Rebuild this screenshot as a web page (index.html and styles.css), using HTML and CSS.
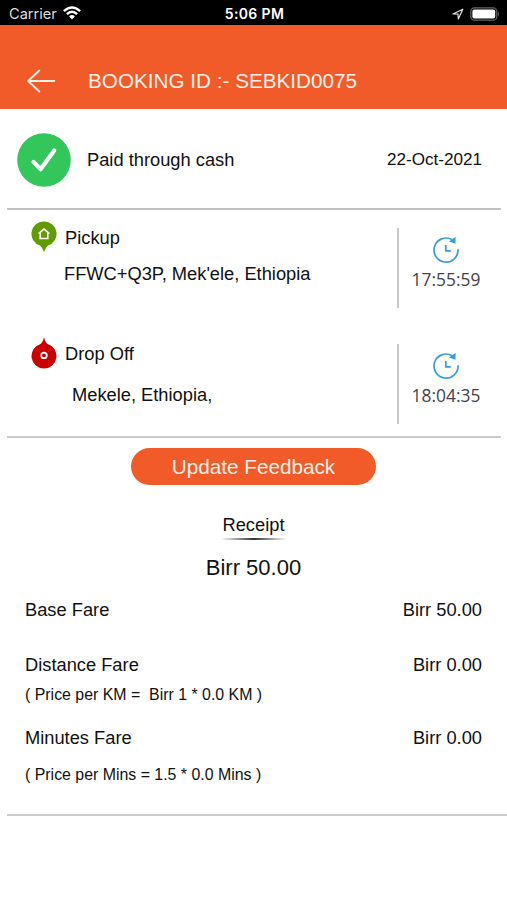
FILE: index.html
```html
<!DOCTYPE html>
<html lang="en">
<head>
<meta charset="utf-8">
<title>Booking receipt</title>
<link rel="stylesheet" href="styles.css">
</head>
<body>
<div class="status">
  <div class="carrier"><span>Carrier</span>
    <svg width="18" height="14" viewBox="0 0 18 14" fill="none" stroke="#fff" stroke-width="2.5"><path d="M.9 5.1Q9-2.2 17.1 5.1M3.9 8.1Q9 3.5 14.1 8.1"/><path d="M6.1 10.4Q9 7.8 11.9 10.4L9 13.4Z" fill="#fff" stroke="none"/></svg>
  </div>
  <div class="clock">5:06 PM</div>
  <div class="indicators">
    <svg width="12" height="12" viewBox="0 0 12 12" fill="none" stroke="#ddd" stroke-width="1.2" stroke-linejoin="round"><path d="M1 6L10.8 1.2L6.3 10.9L6 6.2Z"/></svg>
    <svg width="30" height="14" viewBox="0 0 30 14"><rect x=".8" y=".8" width="26" height="12.4" rx="3.8" fill="none" stroke="#666" stroke-width="1.2"/><rect x="2.4" y="2.4" width="22.8" height="9.2" rx="2" fill="#fff"/><path d="M28 4.5Q30 7 28 9.5Z" fill="#666"/></svg>
  </div>
</div>
<header class="header">
  <svg width="30" height="26" viewBox="0 0 30 26" fill="none" stroke="#fff1e8" stroke-width="1.9" stroke-linecap="round" stroke-linejoin="round"><path d="M27.300 13H1.200M12.300 2.500L1.200 13L12.300 23.500"/></svg>
  <h1>BOOKING ID :- SEBKID0075</h1>
</header>
<section class="paid">
  <svg width="54" height="54" viewBox="0 0 54 54"><circle cx="27" cy="27" r="26.8" fill="#33c65a"/><path d="M16.500 29L23.600 36.300L37.200 17.500" fill="none" stroke="#fff" stroke-width="4.200" stroke-linecap="round" stroke-linejoin="round"/></svg>
  <span class="method">Paid through cash</span>
  <span class="date">22-Oct-2021</span>
</section>
<section class="trip">
  <div class="stop">
    <svg class="pin" width="26" height="32" viewBox="0 0 26 32"><path d="M13 .5A12.300 12.300 0 0 1 17 24.500Q15 26 13 31Q11 26 9 24.500A12.300 12.300 0 0 1 13 .5Z" fill="#629b00"/><path d="M7.500 12.600L13 8.100L18.500 12.600M9.200 12V17.500H16.800V12" fill="none" stroke="#fff" stroke-width="1.600"/></svg>
    <div class="place"><div class="label">Pickup</div><div class="address">FFWC+Q3P, Mek'ele, Ethiopia</div></div>
    <div class="time">
      <svg width="26" height="26" viewBox="0 0 26 26" fill="none" stroke="#389cde" stroke-width="1.700"><path d="M25 12.200A12 12 0 1 1 18.900 2.600M12.800 8V13.800H17.800"/><path d="M17.300 4.300L21.900 1.100V5.800Z" fill="#389cde" stroke-width="1.300"/></svg>
      <span>17:55:59</span>
    </div>
  </div>
  <div class="stop dropoff">
    <svg class="pin" width="26" height="32" viewBox="0 0 26 32"><path d="M13 31.500A12.500 12.500 0 0 1 9.500 7Q11.500 5.500 13 .5Q14.500 5.500 16.500 7A12.500 12.500 0 0 1 13 31.500Z" fill="#cb0000"/><circle cx="13" cy="18.400" r="2.800" fill="none" stroke="#fff" stroke-width="1.700"/></svg>
    <div class="place"><div class="label">Drop Off</div><div class="address">Mekele, Ethiopia,</div></div>
    <div class="time">
      <svg width="26" height="26" viewBox="0 0 26 26" fill="none" stroke="#389cde" stroke-width="1.700"><path d="M25 12.200A12 12 0 1 1 18.900 2.600M12.800 8V13.800H17.800"/><path d="M17.300 4.300L21.900 1.100V5.800Z" fill="#389cde" stroke-width="1.300"/></svg>
      <span>18:04:35</span>
    </div>
  </div>
</section>
<button class="feedback">Update Feedback</button>
<section class="receipt">
  <h2>Receipt</h2>
  <div class="rule"></div>
  <div class="total">Birr 50.00</div>
  <div class="row base"><span>Base Fare</span><span>Birr 50.00</span></div>
  <div class="row"><span>Distance Fare</span><span>Birr 0.00</span></div>
  <p class="note km">( Price per KM =&nbsp; Birr 1 * 0.0 KM )</p>
  <div class="row"><span>Minutes Fare</span><span>Birr 0.00</span></div>
  <p class="note mins">( Price per Mins = 1.5 * 0.0 Mins )</p>
</section>
</body>
</html>
```
FILE: styles.css
```css
* { box-sizing: border-box; }
body {
  margin: 0;
  min-height: 900px;
  background: #fff;
  color: #111;
  font: 18.3px/24px "Liberation Sans", Arial, sans-serif;
}
svg { display: block; flex: none; }
h1, h2, p { margin: 0; font-weight: 400; }
.status {
  display: grid;
  grid-template-columns: 1fr auto 1fr;
  align-items: center;
  height: 25px;
  padding: 2px 7px 0 9px;
  background: #000;
  color: #fff;
  font: 14.6px/22px Inter, sans-serif;
}
.carrier { display: flex; align-items: center; gap: 6px; color: #ddd; }
.carrier svg { margin-top: -2px; }
.clock { font-weight: 600; font-size: 14px; letter-spacing: .35px; }
.indicators { display: flex; justify-content: flex-end; align-items: center; gap: 6px; }
.header {
  display: flex;
  align-items: center;
  gap: 31px;
  height: 84px;
  padding: 28px 0 0 27px;
  background: #f15a29;
  color: #fff1e8;
}
h1 { font-size: 20.7px; }
.paid {
  display: flex;
  align-items: center;
  height: 101px;
  margin: 0 6px 0 7px;
  padding: 2px 19px 0 10px;
  border-bottom: 2px solid #c1c1c1;
}
.method { margin-left: 16px; }
.date { margin-left: auto; font-size: 17.1px; }
.trip {
  height: 228px;
  margin: 0 6px 0 7px;
  padding-top: 18px;
  border-bottom: 2px solid #ccc;
}
.stop { display: flex; height: 80px; margin-bottom: 36px; }
.pin { margin: -7px 8px 0 24px; }
.place { flex: 1; margin-top: -2px; }
.address { margin: 12px 0 0 -1px; }
.dropoff .address { margin: 17px 0 0 7px; }
.time {
  display: flex;
  flex-direction: column;
  align-items: center;
  width: 104px;
  padding: 9px 8px 0 0;
  border-left: 2px solid #c8c8c8;
  color: #444;
  font: 17.4px/24px "Open Sans", sans-serif;
}
.time span { margin-top: 4px; }
.feedback {
  display: block;
  width: 245px;
  height: 37px;
  margin: 10px 0 0 131px;
  padding: 0;
  border: 0;
  border-radius: 19px;
  background: #f15a29;
  color: #fff1e8;
  font: 20.7px/37px "Liberation Sans", Arial, sans-serif;
}
.receipt {
  height: 331px;
  margin-left: 7px;
  padding: 28px 25px 0 18px;
  border-bottom: 2px solid #ccc;
}
h2 { font-size: 18.3px; text-align: center; }
.rule {
  width: 66px;
  height: 2px;
  margin: 1px auto 0;
  background: linear-gradient(90deg, transparent, #333 50%, transparent);
}
.total { margin-top: 16px; font-size: 22px; text-align: center; }
.row { display: flex; justify-content: space-between; }
.base { margin: 18px 0 31px; }
.note { font-size: 15.9px; }
.km { margin: 6px 0 19px; }
.mins { margin-top: 13px; }
```
